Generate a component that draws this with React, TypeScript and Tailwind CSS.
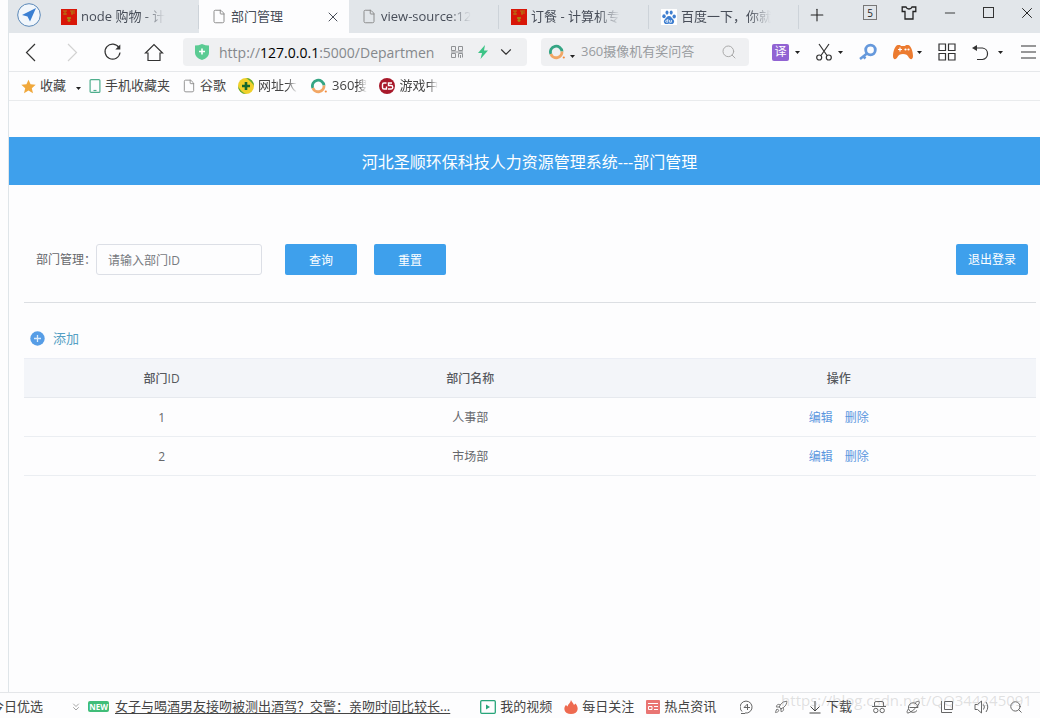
import React, { useState } from "react";
import { ChevronDown, ChevronsDown, File, Search, Plus, X, Minus, Rocket } from "lucide-react";

const TABS = [
  { title: "node 购物 - 计", icon: "red" },
  { title: "部门管理", icon: "file" },
  { title: "view-source:12", icon: "file" },
  { title: "订餐 - 计算机专", icon: "red" },
  { title: "百度一下，你就", icon: "baidu" },
];

const DEPARTMENTS = [
  { id: 1, name: "人事部" },
  { id: 2, name: "市场部" },
];

const FADE = "[mask-image:linear-gradient(to_right,black_75%,transparent)]";

function RedIcon() {
  return (
    <svg width="16" height="16" viewBox="0 0 16 16" className="shrink-0">
      <rect width="16" height="16" fill="#d81608" />
      <path d="M2 2h4M4 2v4M2 5h4M9 2h5M10 4h4M11 2v4" stroke="#b07a12" strokeWidth="1" fill="none" />
      <path d="M6 9h4M8 8v5M6.500 11.500h3" stroke="#a88a14" strokeWidth="1.400" fill="none" />
    </svg>
  );
}

function BaiduIcon() {
  return (
    <svg width="16" height="16" viewBox="0 0 16 16" className="shrink-0">
      <rect width="16" height="16" fill="#fff" />
      <g fill="#3f7fd0">
        <ellipse cx="3" cy="7.200" rx="1.700" ry="2" />
        <ellipse cx="6" cy="3.600" rx="1.500" ry="2.100" />
        <ellipse cx="10.200" cy="3.600" rx="1.500" ry="2.100" />
        <ellipse cx="13.200" cy="7.400" rx="1.700" ry="2" />
        <path d="M8 7c2.200 0 2.600 2 4.300 3.400 1.600 1.500.8 4.600-1.500 4.600-1.200 0-1.700-.3-2.800-.3s-1.600.3-2.800.3c-2.300 0-3.100-3.100-1.500-4.600C5.400 9 5.800 7 8 7z" />
      </g>
      <path d="M6.800 10v3.200H5.600a.9.9 0 0 1 0-1.900h1.200M8.600 11v2.200h1.800V11" stroke="#fff" strokeWidth=".8" fill="none" />
    </svg>
  );
}

function RingIcon() {
  return (
    <svg width="17" height="16" viewBox="0 0 17 16" fill="none" strokeWidth="2.800" className="shrink-0">
      <path d="M1.800 10A5.800 5.800 0 1 1 13 7.500" stroke="#35a584" />
      <path d="M13 7.500A5.800 5.800 0 0 1 1.800 10" stroke="#f2a765" />
      <circle cx="14.800" cy="13.500" r="1.100" fill="#f28a3c" />
    </svg>
  );
}

function Caret() {
  return (
    <svg width="5" height="3" viewBox="0 0 5 3" className="shrink-0">
      <path d="M0 0h5L2.500 3z" fill="#222" />
    </svg>
  );
}

function TabIcon({ kind }: { kind: string }) {
  if (kind === "red") return <RedIcon />;
  if (kind === "baidu") return <BaiduIcon />;
  return <File className="w-4 h-[15px] shrink-0 text-[#888]" strokeWidth={1.5} />;
}

function TitleBar() {
  const [active, setActive] = useState(1);

  return (
    <div className="flex h-[33px] bg-[#e2e6ea] text-[13px] text-[#474d58]">
      <div className="flex w-10 shrink-0 items-center justify-center">
        <svg width="24" height="24" viewBox="0 0 24 24" className="-mt-1">
          <circle cx="12" cy="12" r="11.300" fill="#f1f6fb" stroke="#5a88b8" strokeWidth="1" />
          <path d="M19 5 5 12l5.500 1.500L13 18.500z" fill="#3a7fd2" />
        </svg>
      </div>
      {TABS.map((tab, i) => (
        <div
          key={tab.title}
          className={
            active === i
              ? "flex w-[150px] items-center bg-[#fdfdfe] pr-2"
              : "flex w-[150px] items-center pr-7 bg-[linear-gradient(#cdd3d9,#cdd3d9)] bg-[length:1px_24px] bg-[position:right_center] bg-no-repeat"
          }
        >
          <button onClick={() => setActive(i)} className="flex min-w-0 flex-1 items-center gap-1 pl-3">
            <TabIcon kind={tab.icon} />
            <span className={active === i ? "truncate" : "overflow-hidden whitespace-nowrap " + FADE}>{tab.title}</span>
          </button>
          {active === i && (
            <button aria-label="关闭标签">
              <X className="w-4 h-4" strokeWidth={1.5} />
            </button>
          )}
        </div>
      ))}
      <button aria-label="新标签" className="ml-2 -mt-1">
        <Plus className="w-5 h-5 text-[#222]" strokeWidth={1.3} />
      </button>
      <div className="ml-auto flex items-center gap-6 pr-1 pb-2 text-[#222]">
        <span className="flex h-[15px] w-3.5 items-center justify-center border border-[#777] text-[10px] leading-none">5</span>
        <button aria-label="皮肤">
          <svg width="16" height="14" viewBox="0 0 16 14" fill="none" stroke="currentColor" strokeWidth="1.300">
            <path d="M5 1H1.200v4.500H4V13h8V5.500h2.800V1H11c-.6 1.500-1.600 2-3 2s-2.400-.5-3-2z" />
          </svg>
        </button>
        <button aria-label="最小化"><Minus className="w-[18px] h-4" strokeWidth={1.3} /></button>
        <button aria-label="最大化" className="h-[11px] w-[11px] border border-[#333]" />
        <button aria-label="关闭"><X className="w-[18px] h-[18px]" strokeWidth={1.3} /></button>
      </div>
    </div>
  );
}

function Toolbar() {
  return (
    <div className="flex h-[39px] items-center border-b border-[#e6e8eb] pl-3 pr-1 text-[#333]">
      <div className="flex items-center gap-[21px]">
        <button aria-label="后退">
          <svg width="20" height="20" viewBox="0 0 20 20" fill="none" stroke="currentColor" strokeWidth="1.200"><path d="m14 2-8.500 8.500L14 19" /></svg>
        </button>
        <button aria-label="前进" className="text-[#d2d2d2]">
          <svg width="20" height="20" viewBox="0 0 20 20" fill="none" stroke="currentColor" strokeWidth="1.200"><path d="m6 2 8.500 8.500L6 19" /></svg>
        </button>
        <button aria-label="刷新">
          <svg width="20" height="20" viewBox="0 0 20 20" fill="none" stroke="currentColor" strokeWidth="1.200">
            <path d="M16 5.800A7.500 7.500 0 1 0 17 10.500" />
            <path d="M17.300 2.500v5h-5z" fill="currentColor" stroke="none" />
          </svg>
        </button>
        <button aria-label="主页">
          <svg width="20" height="20" viewBox="0 0 20 20" fill="none" stroke="currentColor" strokeWidth="1.200">
            <path d="M1.500 11 10 2.500l8.500 8.500H16v7.500H4V11z" />
          </svg>
        </button>
      </div>

      <div className="ml-[19px] flex h-7 w-[344px] items-center rounded-sm bg-[#eff0f2] px-3">
        <svg width="14" height="16" viewBox="0 0 14 16" className="shrink-0">
          <path d="M0 1.500Q3.500 1.500 7 0q3.500 1.500 7 1.500V9q0 4.500-7 7-7-2.500-7-7z" fill="#5bcb93" />
          <path d="M7 4.500v6M4 7.500h6" stroke="#fff" strokeWidth="1.600" />
        </svg>
        <p className="ml-2.5 flex-1 overflow-hidden whitespace-nowrap text-[14px] text-[#85888c]">
          http://<span className="text-black">127.0.0.1</span>:5000/Departmen
        </p>
        <svg width="12" height="12" viewBox="0 0 12 12" fill="none" stroke="#909295" className="shrink-0">
          <path d="M.5.5h4v4h-4zM7.500.5h4v4h-4zM.5 7.500h4v4h-4zM7.500 11.500v-4h4v4M9.500 9v3M0 6h12" />
        </svg>
        <svg width="12" height="14" viewBox="0 0 12 14" className="ml-3.5 shrink-0">
          <path d="M8 0 1 8h4l-1.500 6L11 5.500H7z" fill="#3cc486" />
        </svg>
        <ChevronDown className="ml-2 w-[18px] h-[18px] shrink-0" strokeWidth={1.5} />
      </div>

      <div className="ml-3.5 flex h-7 w-[208px] items-center rounded-sm bg-[#eff0f2] pl-2 pr-3">
        <RingIcon />
        <span className="ml-1 mt-2"><Caret /></span>
        <input aria-label="搜索" placeholder="360摄像机有奖问答" className="ml-1.5 min-w-0 flex-1 bg-transparent text-[13px] outline-none placeholder:text-[#999ca0]" />
        <Search className="w-4 h-4 shrink-0 text-[#aaa]" strokeWidth={1.5} />
      </div>

      <div className="ml-auto flex items-center gap-4">
        <button aria-label="翻译" className="flex items-center gap-1.5">
          <span className="flex h-[17px] w-[17px] items-center justify-center rounded-xs bg-[#9163d3] text-[12px] leading-none text-white">译</span>
          <Caret />
        </button>
        <button aria-label="截图" className="flex items-center gap-1.5">
          <svg width="16" height="18" viewBox="0 0 16 18" fill="none" stroke="currentColor" strokeWidth="1.200">
            <path d="m3 1 8 11.500M13 1 5 12.500" />
            <circle cx="3.200" cy="14.500" r="2.500" />
            <circle cx="12.800" cy="14.500" r="2.500" />
          </svg>
          <Caret />
        </button>
        <button aria-label="密码">
          <svg width="18" height="18" viewBox="0 0 18 18" fill="none" stroke="#6699dc">
            <circle cx="11.500" cy="7" r="4.800" strokeWidth="2.800" />
            <path d="m8 10.500-7 5.500M4 13l2.500 2.500" strokeWidth="2.500" />
          </svg>
        </button>
        <button aria-label="游戏" className="flex items-center gap-1">
          <svg width="20" height="16" viewBox="0 0 20 16">
            <path d="M5 1h2l1 1h4l1-1h2c3 0 5 7 5 11 0 4-3 4-4.500 1-1-2-2.500-3-5.500-3s-4.500 1-5.500 3C3 16 0 16 0 12 0 8 2 1 5 1z" fill="#ec7b30" />
            <path d="M7 3.500v4M5 5.500h4" stroke="#fff" strokeWidth="1.200" />
            <circle cx="12.500" cy="5.500" r="1.100" fill="#fff" />
            <circle cx="15.500" cy="5.500" r="1.100" fill="#fff" />
          </svg>
          <Caret />
        </button>
        <button aria-label="应用">
          <svg width="18" height="18" viewBox="0 0 18 18" fill="none" stroke="currentColor" strokeWidth="1.200">
            <path d="M1 1h6.500v6.500H1zM10.500 1H17v6.500h-6.500zM1 10.500h6.500V17H1zM10.500 10.500H17V17h-6.500z" />
          </svg>
        </button>
        <button aria-label="恢复" className="flex items-center gap-2">
          <svg width="18" height="18" viewBox="0 0 18 18" fill="none" stroke="currentColor" strokeWidth="1.200">
            <path d="M2 5h8.500a5.800 5.800 0 0 1 0 11.500H5" />
            <path d="M0 5 5 2v6z" fill="currentColor" stroke="none" />
          </svg>
          <Caret />
        </button>
        <button aria-label="菜单" className="ml-0.5">
          <svg width="15" height="16" viewBox="0 0 15 16" stroke="currentColor" strokeWidth="1.200"><path d="M0 2h15M0 8h15M0 14h15" /></svg>
        </button>
      </div>
    </div>
  );
}

function BookmarkBar() {
  return (
    <nav className="flex h-[29px] items-center border-b border-[#e9ebed] pl-3 text-[13px] text-[#444]">
      <a href="#" className="flex items-center gap-1">
        <svg width="15" height="15" viewBox="0 0 24 24" fill="#f0a83c"><path d="m12 1 3.300 7.500 8.200.8-6.200 5.400 1.900 8L12 18.500l-7.200 4.200 1.900-8L.5 9.300l8.200-.8z" /></svg>
        收藏
        <span className="ml-1.5 mt-1"><Caret /></span>
      </a>
      <a href="#" className="ml-2 flex items-center gap-1">
        <svg width="12" height="14" viewBox="0 0 12 14" fill="none" stroke="#4fae8d"><rect x="1.100" y=".6" width="9.800" height="12.800" rx="1" strokeWidth="1.200" /><path d="M4.500 11.500h3" strokeWidth="1.200" /></svg>
        手机收藏夹
      </a>
      <a href="#" className="ml-3 flex items-center gap-1">
        <File className="w-3.5 h-3.5 text-[#888]" strokeWidth={1.5} />
        谷歌
      </a>
      <a href="#" className="ml-3 flex items-center gap-1">
        <svg width="16" height="16" viewBox="0 0 16 16">
          <circle cx="8" cy="8" r="8" fill="#f0d02a" />
          <path d="M8 0a8 8 0 0 1 8 8q-2-4-8-8zM0 8a8 8 0 0 0 8 8Q2 13 0 8z" fill="#5aa83a" />
          <path d="M8 4v8M4 8h8" stroke="#14682c" strokeWidth="2.600" />
        </svg>
        <span className={FADE}>网址大</span>
      </a>
      <a href="#" className="ml-3.5 flex items-center gap-1">
        <RingIcon />
        <span className={FADE}>360搜</span>
      </a>
      <a href="#" className="ml-3 flex items-center gap-1">
        <svg width="16" height="16" viewBox="0 0 16 16">
          <circle cx="8" cy="8" r="8" fill="#a8192b" />
          <path d="M7.500 5H5a1.500 1.500 0 0 0-1.500 1.500v3A1.500 1.500 0 0 0 5 11h2.500V8.500M13 5H9.500v2.500H12a1 1 0 0 1 0 3.500H9" fill="none" stroke="#fff" strokeWidth="1.400" />
        </svg>
        <span className={FADE}>游戏中</span>
      </a>
    </nav>
  );
}

function DepartmentPage() {
  const [keyword, setKeyword] = useState("");

  return (
    <main className="flex-1 pt-9 text-[12px] text-[#66686c]">
      <h1 className="h-12 bg-[#3ea0ec] pl-2.5 text-center text-[16px] leading-[50px] text-white">
        河北圣顺环保科技人力资源管理系统---部门管理
      </h1>

      <div className="ml-[15px] mr-1">
        <form className="flex items-center border-b border-[#dcdfe3] pt-[59px] pb-[27px] pl-3 pr-2" onSubmit={(e) => e.preventDefault()}>
          <label htmlFor="dept">部门管理：</label>
          <input
            id="dept"
            value={keyword}
            onChange={(e) => setKeyword(e.target.value)}
            placeholder="请输入部门ID"
            className="h-[31px] w-[166px] rounded-[3px] border border-[#dcdfe6] px-[11px] pt-0.5 outline-none placeholder:text-[#777a7f]"
          />
          <button type="submit" className="ml-[23px] h-[31px] w-[72px] rounded-xs bg-[#3ea0ec] pt-0.5 text-white">查询</button>
          <button type="button" onClick={() => setKeyword("")} className="ml-[17px] h-[31px] w-[72px] rounded-xs bg-[#3ea0ec] pt-0.5 text-white">重置</button>
          <button type="button" className="ml-auto h-[31px] w-[72px] rounded-xs bg-[#3ea0ec] text-white">退出登录</button>
        </form>

        <button className="mt-[25px] mb-[9px] ml-1.5 flex items-center gap-2 text-[13px] leading-[21px] text-[#559fc4]">
          <svg width="15" height="15" viewBox="0 0 15 15">
            <circle cx="7.500" cy="7.500" r="7.200" fill="#569de6" />
            <path d="M7.500 4v7M4 7.500h7" stroke="#dcecfb" strokeWidth="1.300" />
          </svg>
          添加
        </button>

        <table className="w-full table-fixed border-t border-[#ebeef5] text-center">
          <thead>
            <tr className="h-[39px] border-b border-[#e6e9ee] bg-[#f3f5f9] text-[#55585d]">
              <th className="w-[27%] pt-0.5 pl-0.5 font-medium">部门ID</th>
              <th className="w-[34%] pt-0.5 pl-0.5 font-medium">部门名称</th>
              <th className="w-[39%] pt-0.5 font-medium">操作</th>
            </tr>
          </thead>
          <tbody>
            {DEPARTMENTS.map((dept) => (
              <tr key={dept.id} className="h-[39px] border-b border-[#ebeef2]">
                <td className="pt-0.5 pl-0.5">{dept.id}</td>
                <td className="pt-0.5 pl-0.5">{dept.name}</td>
                <td className="pt-0.5">
                  <div className="flex justify-center gap-3 text-[#5b97de]">
                    <a href="#">编辑</a>
                    <a href="#">删除</a>
                  </div>
                </td>
              </tr>
            ))}
          </tbody>
        </table>
      </div>
    </main>
  );
}

function StatusBar() {
  return (
    <footer className="relative flex h-[26px] items-center overflow-hidden border-t border-[#e4e6e9] pt-0.5 text-[13px] whitespace-nowrap text-[#444]">
      <span className="-ml-[9px]">今日优选</span>
      <ChevronsDown className="ml-[27px] w-3 h-3 shrink-0 text-[#888]" strokeWidth={1.5} />
      <span className="ml-1.5 flex h-[11px] w-[21px] shrink-0 items-center justify-center rounded-xs bg-[#40bd78] text-[8px] font-bold leading-none text-white">NEW</span>
      <a href="#" className="ml-1.5 underline underline-offset-2">女子与喝酒男友接吻被测出酒驾？交警：亲吻时间比较长...</a>
      <a href="#" className="ml-[30px] flex items-center gap-1">
        <svg width="16" height="14" viewBox="0 0 16 14"><rect x=".7" y=".7" width="14.600" height="12.600" rx="1" fill="none" stroke="#27a57a" strokeWidth="1.300" /><path d="m6 4.500 4 2.500-4 2.500z" fill="#27a57a" /></svg>
        我的视频
      </a>
      <a href="#" className="ml-3 flex items-center gap-1">
        <svg width="14" height="14" viewBox="0 0 14 14"><path d="M7 0c.5 2 2.500 3 3 5l1.500-1.500C13.500 6 14 8 13.500 10c-.7 2.500-3 4-6.500 4S1.200 12.500.5 10C0 7.500 1 6 2 5l1.500 1.500C4 4 6.500 3 7 0z" fill="#ee6a50" /></svg>
        每日关注
      </a>
      <a href="#" className="ml-3 flex items-center gap-1">
        <svg width="14" height="14" viewBox="0 0 14 14"><rect width="14" height="14" rx="1" fill="#e97573" /><path d="M2 3.500h10M2.500 6.500h3.500v3H2.500zM8 6.500h4M8 9.500h4" stroke="#fff" fill="none" /></svg>
        热点资讯
      </a>
      <div className="ml-auto flex items-center gap-5 pr-[17px] text-[#666]">
        <button aria-label="加速">
          <svg width="14" height="14" viewBox="0 0 14 14" fill="none" stroke="currentColor"><path d="M2 11.500A6 6 0 1 1 5 13M1 13.500h4M4 7.500h6M7.500 4v6M7.500 4 4 7.500" /></svg>
        </button>
        <button aria-label="火箭"><Rocket className="w-3.5 h-3.5" strokeWidth={1.5} /></button>
        <button className="flex items-center gap-1 text-[#444]">
          <svg width="14" height="14" viewBox="0 0 14 14" fill="none" stroke="currentColor"><path d="M7 1v9.500M2.500 6.500 7 11l4.500-4.500M1.500 13h11" /></svg>
          下载
        </button>
        <button aria-label="无痕">
          <svg width="14" height="14" viewBox="0 0 14 14" fill="none" stroke="currentColor"><path d="M0 6.500h14M2.500 6V3q0-1.500 1.500-1.500h6q1.500 0 1.500 1.500v3" /><circle cx="3.800" cy="10.500" r="2.200" /><circle cx="10.200" cy="10.500" r="2.200" /></svg>
        </button>
        <button aria-label="内核">
          <svg width="14" height="14" viewBox="0 0 14 14" fill="none" stroke="currentColor"><path d="M3.500 7.500h8.500A4.800 4.800 0 1 0 11 10.500M9.500 2.500C12.500.5 14 1 13 3.500c-2 4-8 9-11 9.500-2 0-.5-3 .5-4" /></svg>
        </button>
        <button aria-label="窗口">
          <svg width="14" height="14" viewBox="0 0 14 14" fill="none" stroke="currentColor"><path d="M4.500 1.500h8v8h-8zM1.500 1v11.500H12" /></svg>
        </button>
        <button aria-label="声音">
          <svg width="15" height="14" viewBox="0 0 15 14" fill="none" stroke="currentColor"><path d="M1 4.500h2.500L7.500 1v12L3.500 9.500H1zM9.500 4.500q1.800 2.500 0 5M12 2q3.500 5 0 10" /></svg>
        </button>
        <button aria-label="查找"><Search className="w-3.5 h-3.5" strokeWidth={1.7} /></button>
      </div>
      <span className="pointer-events-none absolute right-2 -top-1 text-[15px] text-[#999]/30">https://blog.csdn.net/QQ344245091</span>
    </footer>
  );
}

export default function App() {
  return (
    <div className="flex min-h-screen flex-col overflow-hidden bg-[#fdfdfe] font-['Open_Sans','Noto_Sans_CJK_SC',sans-serif]">
      <div className="ml-2 flex flex-1 flex-col border-l border-[#dfe5e9]">
        <TitleBar />
        <Toolbar />
        <BookmarkBar />
        <DepartmentPage />
      </div>
      <StatusBar />
    </div>
  );
}
